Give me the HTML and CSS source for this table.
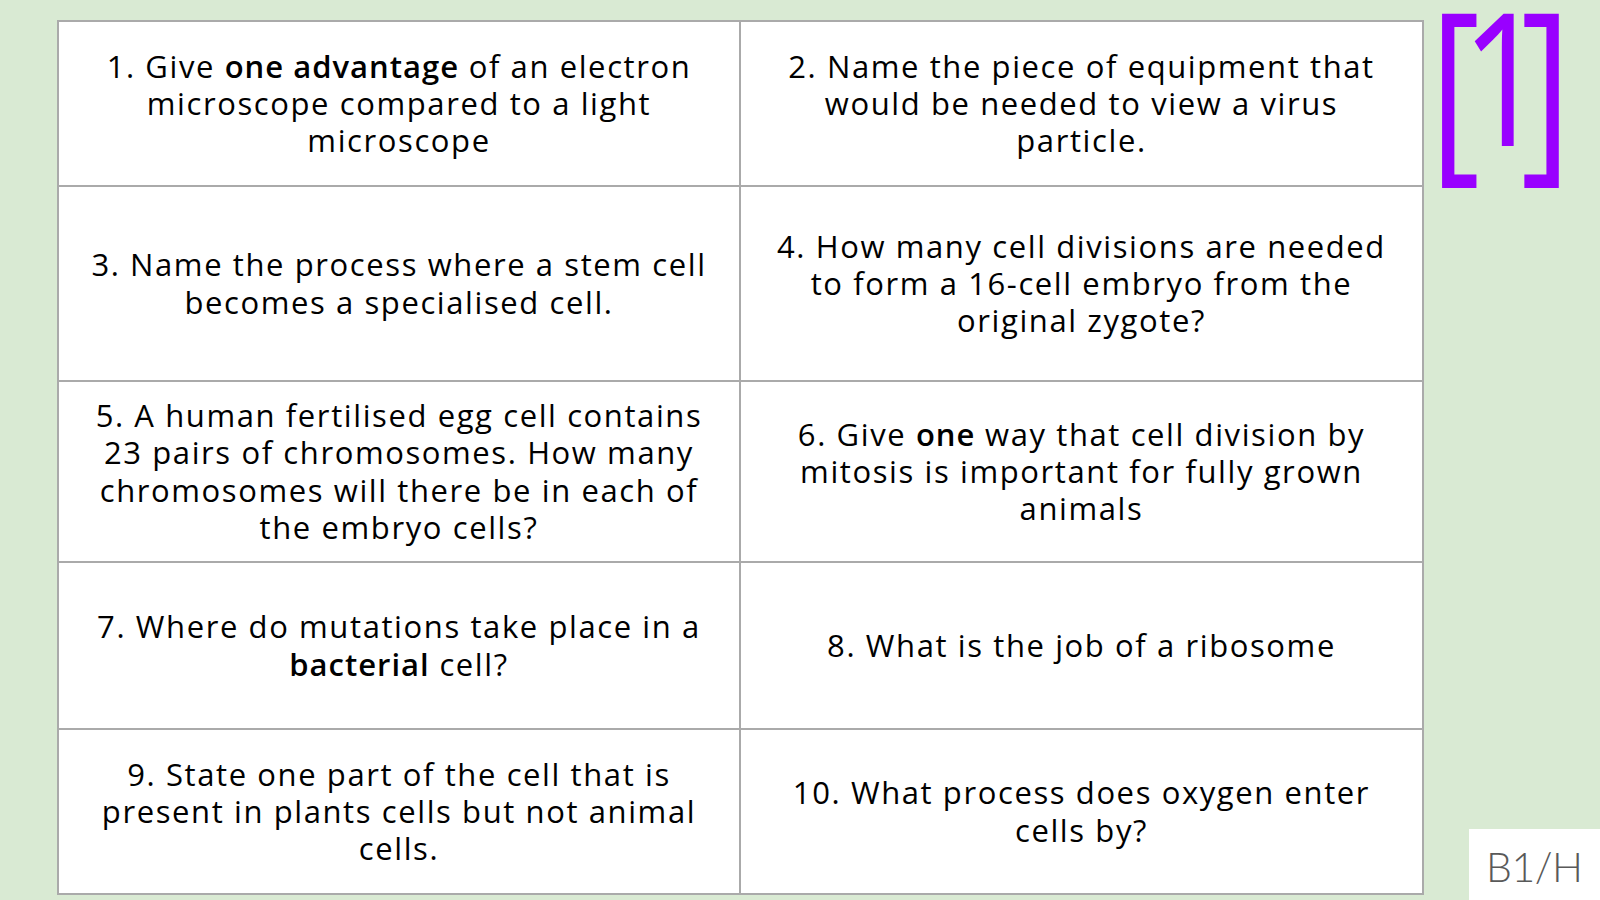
FILE: index.html
```html
<!DOCTYPE html>
<html lang="en">
<head>
<meta charset="utf-8">
<title>B1 Retrieval</title>
<link rel="stylesheet" href="styles.css">
</head>
<body>
<div class="slide">
  <div class="grid">
    <div class="cell"><p>1. Give <b>one advantage</b> of an electron<br>microscope compared to a light<br>microscope</p></div>
    <div class="cell"><p>2. Name the piece of equipment that<br>would be needed to view a virus<br>particle.</p></div>
    <div class="cell"><p>3. Name the process where a stem cell<br>becomes a specialised cell.</p></div>
    <div class="cell"><p>4. How many cell divisions are needed<br>to form a 16-cell embryo from the<br>original zygote?</p></div>
    <div class="cell"><p>5. A human fertilised egg cell contains<br>23 pairs of chromosomes. How many<br>chromosomes will there be in each of<br>the embryo cells?</p></div>
    <div class="cell"><p>6. Give <b>one</b> way that cell division by<br>mitosis is important for fully grown<br>animals</p></div>
    <div class="cell"><p>7. Where do mutations take place in a<br><b>bacterial</b> cell?</p></div>
    <div class="cell"><p>8. What is the job of a ribosome</p></div>
    <div class="cell"><p>9. State one part of the cell that is<br>present in plants cells but not animal<br>cells.</p></div>
    <div class="cell"><p>10. What process does oxygen enter<br>cells by?</p></div>
  </div>
  <aside class="side">
    <div class="mark"><span class="ch ch-l">[</span><span class="ch ch-n">1</span><span class="ch ch-r">]</span></div>
    <div class="code">B1/H</div>
  </aside>
</div>
</body>
</html>
```
FILE: styles.css
```css
html, body {
  margin: 0;
  padding: 0;
}
body {
  background: #d9ead3;
  font-family: "Open Sans", "Liberation Sans", sans-serif;
}
.slide {
  width: 1600px;
  height: 900px;
  display: flex;
  box-sizing: border-box;
  padding: 20px 0 0 57px;
  overflow: hidden;
}
.grid {
  flex: 0 0 auto;
  display: grid;
  grid-template-columns: 682px 683px;
  grid-template-rows: 165px 195px 181px 167px 165px;
  border-top: 2px solid #aaaaaa;
  border-left: 2px solid #aaaaaa;
  background: #ffffff;
  align-self: flex-start;
}
.cell {
  border-right: 2px solid #aaaaaa;
  border-bottom: 2px solid #aaaaaa;
  display: flex;
  align-items: center;
  justify-content: center;
  text-align: center;
}
.cell p {
  margin: 0;
  font-size: 31px;
  letter-spacing: 1.6px;
  line-height: 37.3px;
  color: #000000;
  white-space: nowrap;
}
.cell b {
  font-weight: 600;
  letter-spacing: 1px;
}
.side {
  flex: 0 0 176px;
  min-width: 0;
  display: flex;
  flex-direction: column;
  align-items: flex-end;
  justify-content: space-between;
  margin-top: -20px;
}
.mark {
  align-self: flex-start;
  display: flex;
  margin: 0 0 0 12px;
  font-family: "Open Sans", sans-serif;
  font-weight: 400;
  font-size: 199px;
  line-height: 158px;
  color: #9900ff;
}
.ch {
  display: flex;
  justify-content: center;
  width: 38px;
}
.ch-l,
.ch-r {
  transform: scaleX(0.78);
}
.ch-n {
  margin-left: 11px;
  transform: scale(0.75, 0.93);
  transform-origin: 50% 15px;
}
.ch-r {
  margin-left: 4px;
}
.code {
  width: 131px;
  height: 71px;
  background: #ffffff;
  box-sizing: border-box;
  padding: 10px 0 0 17px;
  font-family: "Lato", "Open Sans", sans-serif;
  font-weight: 300;
  font-size: 41px;
  letter-spacing: -0.5px;
  line-height: 56px;
  color: #595959;
  white-space: nowrap;
}
```
